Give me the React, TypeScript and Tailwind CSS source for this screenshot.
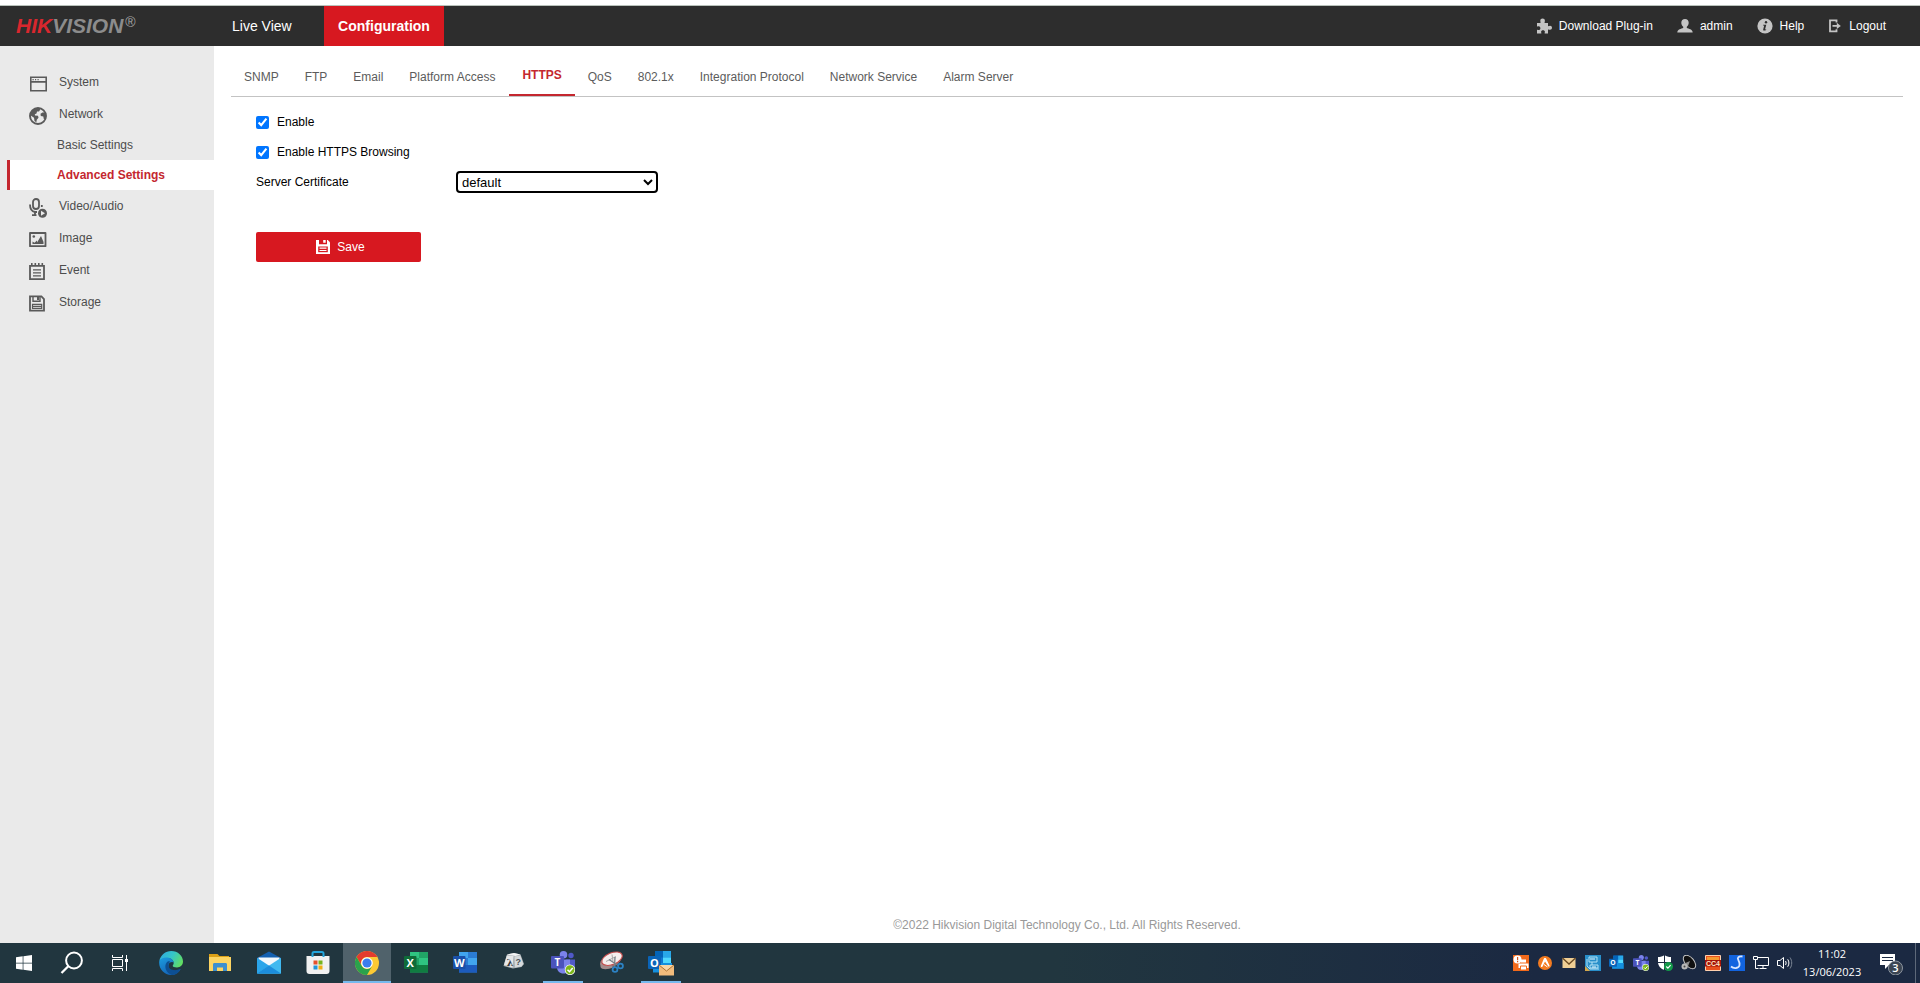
import React from 'react';
import clsx from 'clsx';

type IconProps = { className?: string };

/* ---------- Header icons ---------- */

const PuzzleIcon: React.FC<IconProps> = ({ className }) => (
    <svg viewBox="0 0 16 16" className={className} fill="currentColor">
        <path d="M1 5h3.400C4.900 4.300 4.300 3.900 4.300 2.700 4.300 1.400 5.300 .5 6.600 .5s2.300.9 2.300 2.200c0 1.200-.6 1.600-.2 2.300H12v3c.7.400 1.100-.2 2.100-.2 1.100 0 1.900.9 1.900 2s-.8 2-1.900 2c-1 0-1.400-.6-2.100-.2V15.500H8.700c-.3-.6.2-1 .2-1.700 0-1-.8-1.600-1.900-1.600s-1.900.6-1.900 1.600c0 .7.500 1.100.2 1.700H1v-3.700c.6-.3 1 .2 1.700.2 1 0 1.700-.8 1.700-1.800S3.700 8.300 2.700 8.300c-.7 0-1.100.4-1.700.1z" />
    </svg>
);

const UserIcon: React.FC<IconProps> = ({ className }) => (
    <svg viewBox="0 0 16 16" className={className} fill="currentColor">
        <path d="M8 1c2.300 0 3.700 1.600 3.700 3.800 0 1.700-.8 3-1.900 3.900v1.400c1.900.7 5.700 1.300 5.900 4.400H.3c.2-3.100 4-3.700 5.900-4.400V8.700C5.100 7.800 4.300 6.500 4.300 4.800 4.300 2.600 5.700 1 8 1z" />
    </svg>
);

const InfoIcon: React.FC<IconProps> = ({ className }) => (
    <svg viewBox="0 0 16 16" className={className}>
        <circle cx="8" cy="8" r="7.600" fill="currentColor" />
        <circle cx="9" cy="4.300" r="1.200" fill="#2d2d2d" />
        <path d="M6.200 6.700h3.100L8 11.500l1.300-.3-.3.900c-1 .7-3.200.9-2.800-.7l1-3.800-1.300-.1z" fill="#2d2d2d" />
    </svg>
);

const LogoutIcon: React.FC<IconProps> = ({ className }) => (
    <svg viewBox="0 0 14 16" className={clsx(className, 'w-[14px]')} fill="none" stroke="currentColor" strokeWidth="1.800">
        <path d="M8.500 4.500V2.400H2v11h6.500v-2.100M4.500 7.900H10" />
        <path d="M8.800 4.700 12.800 7.900l-4 3.200z" fill="currentColor" stroke="none" />
    </svg>
);

/* ---------- Sidebar icons ---------- */

const SystemIcon: React.FC<IconProps> = ({ className }) => (
    <svg viewBox="0 0 18 18" className={className} fill="none" stroke="currentColor" strokeWidth="1.600">
        <path d="M1.800 2.300h15.400v13.400H1.800zM1.800 6.900h15.400" />
        <path d="M3.500 4.600h1.200M6 4.600h1.200M8.500 4.600h1.200" strokeWidth="1.200" />
    </svg>
);

const GlobeIcon: React.FC<IconProps> = ({ className }) => (
    <svg viewBox="0 0 18 18" className={className}>
        <circle cx="9" cy="9" r="8" fill="none" stroke="currentColor" strokeWidth="1.900" />
        <path d="M1 8 2 5l3-3 4.500-1 1.800 1.500L10 4.500H8L7.500 6.500 5.800 7.200 6 8.500l3 .2.5 2-1.700 2-.5 2.500L5.500 14l-.5-3.200z" fill="currentColor" />
        <path d="M17 6.500l-3-1.300-2.500 1.500.3 2.300 2.500.5.5 2.500 1.700.5z" fill="currentColor" />
    </svg>
);

const VideoIcon: React.FC<IconProps> = ({ className }) => (
    <svg viewBox="0 0 18 20" className={clsx(className, 'h-5')} fill="none" stroke="currentColor" strokeWidth="1.800">
        <rect x="4" y="1" width="6" height="10" rx="3" />
        <path d="M1 6.500c0 4.500 2 7 5 7.500h2M6 14v3M3 17.200h4.500" />
        <path d="M12.800 7v2" />
        <circle cx="13.500" cy="15.300" r="4.500" fill="currentColor" stroke="none" />
        <path d="m12 12.800 4 2.500-4 2.500z" fill="#eaeaea" stroke="none" />
    </svg>
);

const ImageIcon: React.FC<IconProps> = ({ className }) => (
    <svg viewBox="0 0 18 18" className={className}>
        <path d="M1 2h15.500v13.200H1z" fill="none" stroke="currentColor" strokeWidth="1.800" strokeLinejoin="round" />
        <circle cx="4.800" cy="5.500" r="1.300" fill="currentColor" />
        <path d="M3.500 13V10.500l2 1.200L8 9.500v2l4-6.500 2.500 6v2z" fill="currentColor" />
    </svg>
);

const EventIcon: React.FC<IconProps> = ({ className }) => (
    <svg viewBox="0 0 18 18" className={className} fill="none" stroke="currentColor" strokeWidth="1.800">
        <path d="M1 2.800h14v13.400H1z" />
        <path d="M2.800 0v3M6.300 0v3M9.800 0v3M13.300 0v3" strokeWidth="1.600" />
        <path d="M4 6.800h8M4 9.800h8M4 12.800h8" strokeWidth="1.200" />
    </svg>
);

const DiskIcon: React.FC<IconProps> = ({ className }) => (
    <svg viewBox="0 0 18 18" className={className} fill="none" stroke="currentColor" strokeWidth="1.800">
        <path d="M1 1.400h11.400l2.600 2.600v11.600H1z" />
        <path d="M4 1.500v4.700h7V1.500" strokeWidth="1.400" />
        <path d="M8 2h2v3H8z" fill="currentColor" stroke="none" />
        <path d="M3.500 9.300h9.200v4H3.500zM3.500 11.400h9" strokeWidth="1.200" />
    </svg>
);

const SaveIcon: React.FC<IconProps> = ({ className }) => (
    <svg viewBox="0 0 14 14" className={className}>
        <path d="M0 0h11.800L14 2.200V14H0z" fill="#fff" />
        <path d="M3 0v4.300h8V0H9.700v2.800H7.200V0z" fill="#d71820" />
        <path d="M2.200 6.500h9.600v5.700H2.200z" fill="#d71820" />
        <path d="M3.500 8.200h7M3.500 10.500h7" stroke="#fff" strokeWidth="1.200" />
    </svg>
);

/* ---------- Taskbar icons ---------- */

const WindowsIcon = () => (
    <svg viewBox="0 0 16 16" className="size-4" fill="#fff">
        <path d="M0 2.300 6.700 1.300v6.400H0zM7.400 1.200 16 0v7.700H7.400zM0 8.400h6.700v6.400L0 13.800zM7.400 8.400H16V16l-8.600-1.200z" />
    </svg>
);

const SearchIcon = () => (
    <svg viewBox="0 0 24 24" className="size-6" fill="none" stroke="#fff" strokeWidth="2">
        <circle cx="14" cy="9.500" r="7.900" />
        <path d="M8.500 15 1.500 22" strokeWidth="2.300" />
    </svg>
);

const TaskViewIcon = () => (
    <svg viewBox="0 0 16 16" className="size-4" fill="none" stroke="#fff">
        <path d="M.5 0v2.500h10V0M.5 16v-2.500h10V16M.5 4.500h10v7H.5zM14.500 0v16" />
        <path d="M13 4h3v3h-3z" fill="#fff" stroke="none" />
    </svg>
);

const EdgeIcon = () => (
    <svg viewBox="0 0 24 24" className="size-6">
        <defs>
            <linearGradient id="edgeTop" x1="0" y1="0.200" x2="1" y2="0.600">
                <stop offset="0" stopColor="#2fa9e0" />
                <stop offset=".5" stopColor="#35c6c8" />
                <stop offset="1" stopColor="#62dd62" />
            </linearGradient>
            <linearGradient id="edgeLow" x1="0" y1="0" x2="0.600" y2="1">
                <stop offset="0" stopColor="#1b9de0" />
                <stop offset="1" stopColor="#1460b4" />
            </linearGradient>
        </defs>
        <path d="M.3 10C1.500 4 6.500 0 12.200 0 19 0 24 4.900 24 10.500c0 3.700-2.700 5.900-6 5.900-2.700 0-4.300-.8-4.300-1.700 0-.7 1-1 1-2.700C14.700 9.300 12 7 8.500 7 4.500 7 1.500 8.500.3 10z" fill="url(#edgeTop)" />
        <path d="M.3 10C1.700 7.400 5 6 8.500 6.500c3.500.4 6 2.700 6.100 5-1-1-5.200-.7-5.200 3.400 0 4.500 6 6.700 12.200 3.300C19.500 21.700 16 24 12 24 5 24-.8 17.500.3 10z" fill="url(#edgeLow)" />
        <path d="M8.700 10.500c-4.200 3.300-2.700 11.200 4.300 13.400 3.500.2 6.500-1.800 8.500-5.400.4-.6-.3-.6-.7-.4-5.200 2.400-11.400.5-11.400-3.600 0-1.800.7-3 1.700-3.800-.7-.5-1.700-.6-2.400-.2z" fill="#0d4f93" />
    </svg>
);

const FolderIcon = () => (
    <svg viewBox="0 0 24 24" className="size-6">
        <path d="M1 3h8.500l2 2H21v4H1z" fill="#dba017" />
        <path d="M1 6h22v14H1z" fill="#fcd462" />
        <path d="M5 20v-6.500c0-1 .6-1.500 1.500-1.500h11c.9 0 1.500.5 1.500 1.500V20h-4v-3.500H9V20z" fill="#3d8fcf" />
    </svg>
);

const MailIcon = () => (
    <svg viewBox="0 0 24 24" className="size-6">
        <path d="M0 7 12 .5 24 7v3H0z" fill="#1460b0" />
        <path d="M1.500 6.500h21v9h-21z" fill="#f2f8fc" />
        <path d="M0 6.800 24 22.500H0z" fill="#2aa5ea" />
        <path d="M24 6.800 0 22.500h24z" fill="#40b9f0" />
        <path d="M12 14.600 24 22.500H0z" fill="#1c8ddc" />
    </svg>
);

const StoreIcon = () => (
    <svg viewBox="0 0 24 24" className="size-6">
        <path d="M.5 5h23v15c0 2-1 3-3 3h-17c-2 0-3-1-3-3z" fill="#f1f1f1" />
        <path d="M6.500 6V2.500C6.500 1.500 7 1 8 1h8c1 0 1.500.5 1.500 1.500V6" fill="none" stroke="#22a5dc" strokeWidth="2" />
        <path d="M7.500 9.500h4v4h-4z" fill="#e5502b" />
        <path d="M12.500 9.500h4v4h-4z" fill="#77b41c" />
        <path d="M7.500 14.500h4v4h-4z" fill="#2195d8" />
        <path d="M12.500 14.500h4v4h-4z" fill="#eeae15" />
    </svg>
);

const ChromeIcon = () => (
    <svg viewBox="0 0 24 24" className="size-6">
        <circle cx="12" cy="12" r="12" fill="#fcc934" />
        <path d="M1.600 6A12 12 0 0 1 22.400 6H12a6 6 0 0 0-5.200 9z" fill="#e33b2e" />
        <path d="M1.600 6A12 12 0 0 0 12 24l5.200-9A6 6 0 0 1 6.800 15z" fill="#2ba24c" />
        <circle cx="12" cy="12" r="5.800" fill="#fff" />
        <circle cx="12" cy="12" r="4.600" fill="#3b7ded" />
    </svg>
);

const OfficeIcon: React.FC<{ letter: string; tones: string[] }> = ({ letter, tones }) => (
    <svg viewBox="0 0 24 24" className="size-6">
        <path d="M6 1h18v20.500H6z" fill={tones[0]} />
        <path d="M6 1h9v6H6z" fill={tones[1]} />
        <path d="M15 7h9v7h-9z" fill={tones[1]} />
        <path d="M6 14h18v7.500H6z" fill={tones[2]} />
        <rect x="0" y="5" width="12.500" height="13" rx="1" fill={tones[3]} />
        <text x="6.200" y="15.500" textAnchor="middle" fontSize="11" fontWeight="700" fill="#fff" className="font-['Open_Sans',sans-serif]">{letter}</text>
    </svg>
);

const LambdaIcon = () => (
    <svg viewBox="0 0 24 24" className="size-6">
        <path d="M5 3.500 12 2l6.500 1.500L22 13l-2.500 3-8.500 1.500L1.500 15z" fill="#a9b0b4" />
        <path d="M5 3.500 12 2l6.500 1.500-5 1.500z" fill="#f3f4f4" />
        <path d="M4.800 4.500 11.500 5 10.500 16.500 2 14z" fill="#e5e7e8" />
        <path d="M12.500 5.500 18.300 4.500l3 8.500-2 2.500-6.300 1z" fill="#d5d9db" />
        <text x="4.500" y="14.500" fontSize="10" fontWeight="700" fill="#35393d" className="font-['DejaVu_Serif',serif]">λ</text>
        <text x="13.500" y="13.500" fontSize="9" fontWeight="700" fill="#4a5055" className="font-['Liberation_Sans',sans-serif]">?</text>
    </svg>
);

const TeamsIcon: React.FC<IconProps> = ({ className }) => (
    <svg viewBox="0 0 24 24" className={className}>
        <circle cx="20" cy="4.500" r="2.700" fill="#5059c9" />
        <circle cx="12.500" cy="3.800" r="3.800" fill="#7b83eb" />
        <path d="M15 8.500h9V15c0 3-2 4.500-5 4.500z" fill="#5059c9" />
        <path d="M6 8.500h13V16c0 4-2.500 6.500-6.500 6.500S6 20 6 16z" fill="#7b83eb" />
        <rect x="0" y="5" width="13" height="12.500" rx="1" fill="#4b53bc" />
        <text x="6.500" y="15" textAnchor="middle" fontSize="10" fontWeight="700" fill="#fff" className="font-['Open_Sans',sans-serif]">T</text>
        <circle cx="19" cy="18.700" r="5.200" fill="#fff" />
        <circle cx="19" cy="18.700" r="4.500" fill="#7db61c" />
        <path d="m16.500 18.700 2 2 3.200-3.700" fill="none" stroke="#fff" strokeWidth="1.500" />
    </svg>
);

const SnipIcon = () => (
    <svg viewBox="0 0 24 24" className="size-6">
        <ellipse cx="10.500" cy="10" rx="11" ry="6.500" transform="rotate(-22 10.500 10)" fill="#8d7272" />
        <path d="M.5 12v4c1 3 8 2.500 12 .5L11 13z" fill="#a48c8c" />
        <ellipse cx="12" cy="7.700" rx="10.800" ry="5.800" transform="rotate(-22 12 7.700)" fill="#f5eeee" stroke="#c64b4b" />
        <path d="m6 10.500 10-5M12 3.500l1 7" stroke="#a9a9a9" />
        <path d="m9 8.500 9 6M15 6l-.5 10" stroke="#777f86" strokeWidth="1.300" />
        <circle cx="15" cy="18.500" r="2.400" fill="none" stroke="#2c82c4" strokeWidth="1.800" />
        <circle cx="20.500" cy="15" r="2.400" fill="none" stroke="#2c82c4" strokeWidth="1.800" />
    </svg>
);

const OutlookIcon: React.FC<{ className?: string; badge?: boolean }> = ({ className, badge }) => (
    <svg viewBox="0 0 26 26" className={className}>
        <path d="M7 1h16v13H7z" fill="#0f78d4" />
        <path d="M7 1h8v6.500H7z" fill="#0364b8" />
        <path d="M15 1h8v6.500h-8z" fill="#28a8ea" />
        <path d="M15 7.500h8V14h-8z" fill="#50d9ff" />
        <path d="M5 13h19v9.500H5z" fill="#1490df" />
        <rect x="0" y="6" width="13" height="13" rx="1" fill="#0a64b8" />
        <text x="6.500" y="16.500" textAnchor="middle" fontSize="11" fontWeight="700" fill="#fff" className="font-['Open_Sans',sans-serif]">O</text>
        {badge && (
            <>
                <path d="M11 15h15v10.500H11z" fill="#f0bb7c" />
                <path d="m11 15 7.500 6 7.500-6" fill="#f8d6a6" stroke="#ad7434" />
            </>
        )}
    </svg>
);

const trayIcons = [
    {
        name: 'Printer alert',
        art: (
            <>
                <path d="M0 0h16v16H0z" fill="#f26a1b" />
                <circle cx="4.500" cy="4.500" r="4" fill="#fff" />
                <path d="M4 2h1.200v3.300H4zM4 6h1.200v1.200H4z" fill="#d3541a" />
                <path d="M8 4.500h5v3H8zM5.500 8.500h10V13h-10z" fill="#fff" />
                <path d="M7.500 11h6v4h-6z" fill="#fff" stroke="#f26a1b" />
            </>
        )
    },
    {
        name: 'Avast',
        art: (
            <>
                <circle cx="8" cy="8" r="7" fill="#f47b20" />
                <path d="M8 3c.8 0 1.200.6 1.500 1.200l3 6.300c.4 1-.7 1.600-1.300.8L8 6.500l-2.500 5c-.5 1-2 .5-1.600-.7l2.700-6.500C6.900 3.500 7.300 3 8 3z" fill="#fff" />
                <path d="m7 9.500 3.500 2.500" stroke="#fff" />
            </>
        )
    },
    {
        name: 'New mail',
        art: (
            <>
                <path d="M1.500 3h13v10h-13z" fill="#f0cf95" />
                <path d="m1.500 3 6.500 6 6.500-6" fill="none" stroke="#6a4a22" strokeWidth="1.300" />
            </>
        )
    },
    {
        name: 'Network monitor',
        art: (
            <>
                <path d="M0 0h16v16H0z" fill="#298fca" />
                <path d="M0 11 5 16H0z" fill="#d4a74a" />
                <path d="M4 2h8v5H4zM7 7v3M5 10h8v3H5zM2 4v7l3 3h9" fill="none" stroke="#b4e2f6" />
                <path d="M5 4h5M7 12h4" stroke="#e9f8ff" />
            </>
        )
    },
    { name: 'Outlook', art: null },
    { name: 'Teams', art: null },
    {
        name: 'Windows Security',
        art: (
            <>
                <path d="M7.500 0c2 1.500 4 2 6.500 2v5c0 4-3 7-6.500 8C4 14 1 11 1 7V2c2.500 0 4.500-.5 6.500-2z" fill="#fff" />
                <path d="M7.500 0v15M1 7.500h13" stroke="#1c2b40" />
                <circle cx="11.500" cy="11.500" r="4.500" fill="#149a4a" />
                <path d="m9.300 11.500 1.600 1.600 2.700-3" fill="none" stroke="#fff" strokeWidth="1.200" />
            </>
        )
    },
    {
        name: 'Audio manager',
        art: (
            <>
                <ellipse cx="8.500" cy="7" rx="8" ry="4.500" transform="rotate(50 8.500 7)" fill="#111" stroke="#c6c6c6" />
                <path d="m2 9 7-3-3 8z" fill="#8d8d8d" />
                <circle cx="3.500" cy="11.500" r="3" fill="#b9b9b9" />
                <circle cx="3.500" cy="11.500" r="1" fill="#444" />
            </>
        )
    },
    {
        name: 'CC4',
        art: (
            <>
                <path d="M.5.5h15v15H.5z" fill="#e8501d" stroke="#ffd0ae" />
                <path d="M2 2h12v3H2z" fill="#f6992f" />
                <path d="M0 5h16v6.500H0z" fill="#a31208" />
                <text x="8" y="11" textAnchor="middle" fontSize="7" fontWeight="700" fill="#ffe7c4" className="font-['Liberation_Sans',sans-serif]">CC4</text>
            </>
        )
    },
    {
        name: 'Sync',
        art: (
            <>
                <path d="M0 0h16v16H0z" fill="#1264e0" />
                <path d="M13.500 1.500C9 1 8 3 9.500 5.500c2 3.500 1.500 7-2.500 7.500-2 .2-4-.6-5-1.500" fill="none" stroke="#d9e7ff" strokeWidth="1.800" />
            </>
        )
    },
    {
        name: 'Network',
        art: (
            <g fill="none" stroke="#fff">
                <path d="M4.500 2.500h11v8h-11" />
                <path d="M.5 1.500h4v3h-4zM2.500 4.500v9h3M6.500 13.500h7M10 10.500v3" />
            </g>
        )
    },
    {
        name: 'Volume',
        art: (
            <g fill="none" stroke="#fff">
                <path d="M.5 5.500h2.500l3.500-3v11l-3.500-3H.5z" />
                <path d="M8.500 6c.8 1.300.8 2.700 0 4M10.700 4.300c1.600 2.300 1.600 5.100 0 7.400" />
                <path d="M13 2.500c2.300 3.300 2.300 7.700 0 11" stroke="#7d8796" />
            </g>
        )
    }
];

/* ---------- Data ---------- */

const tools = [
    { label: 'Download Plug-in', icon: PuzzleIcon },
    { label: 'admin', icon: UserIcon },
    { label: 'Help', icon: InfoIcon },
    { label: 'Logout', icon: LogoutIcon }
];

const menu = [
    { label: 'System', icon: SystemIcon },
    { label: 'Network', icon: GlobeIcon, children: ['Basic Settings', 'Advanced Settings'] },
    { label: 'Video/Audio', icon: VideoIcon },
    { label: 'Image', icon: ImageIcon },
    { label: 'Event', icon: EventIcon },
    { label: 'Storage', icon: DiskIcon }
];

const tabs = [
    'SNMP', 'FTP', 'Email', 'Platform Access', 'HTTPS', 'QoS', '802.1x',
    'Integration Protocol', 'Network Service', 'Alarm Server'
];

const apps = [
    { name: 'Edge', icon: <EdgeIcon /> },
    { name: 'File Explorer', icon: <FolderIcon /> },
    { name: 'Mail', icon: <MailIcon /> },
    { name: 'Store', icon: <StoreIcon /> },
    { name: 'Chrome', icon: <ChromeIcon />, active: true },
    { name: 'Excel', icon: <OfficeIcon letter="X" tones={['#21a366', '#2fc481', '#107c41', '#0f6b38']} /> },
    { name: 'Word', icon: <OfficeIcon letter="W" tones={['#2b7cd3', '#41a5ee', '#1d5bbd', '#1a50a8']} /> },
    { name: 'Lambda', icon: <LambdaIcon /> },
    { name: 'Teams', icon: <TeamsIcon className="size-6" />, open: true },
    { name: 'Snipping Tool', icon: <SnipIcon /> },
    { name: 'Outlook', icon: <OutlookIcon className="size-[26px]" badge />, open: true }
];

/* ---------- Layout ---------- */

const Header = () => (
    <header className="flex h-10 items-stretch bg-[#2d2d2d] text-white">
        <div className="flex w-[202px] shrink-0 items-start pt-2 pl-4">
            <span className="text-[21px] leading-6 font-bold italic text-[#d9272e]">HIK</span>
            <span className="text-[21px] leading-6 font-bold italic text-[#8c8c8c]">VISION</span>
            <span className="pl-[2px] text-sm leading-4 text-[#a5a5a5]">®</span>
        </div>
        <nav className="flex text-sm">
            <a href="#live" className="flex w-[122px] items-center pl-[30px]">Live View</a>
            <a href="#configuration" className="flex w-[120px] items-center justify-center bg-[#d71820] font-bold">Configuration</a>
        </nav>
        <div className="ml-auto flex items-center gap-6 pr-[34px] text-xs">
            {tools.map(({ label, icon: Icon }) => (
                <a key={label} href="#tools" className="flex items-center gap-[7px]">
                    <Icon className="size-4 text-[#c4c4c4]" />
                    {label}
                </a>
            ))}
        </div>
    </header>
);

const Sidebar = () => (
    <aside className="w-[214px] shrink-0 bg-[#eaeaea] pt-5 text-xs text-[#4d4d4d]">
        {menu.map(({ label, icon: Icon, children }) => (
            <div key={label}>
                <a href="#menu" className="flex h-8 items-center gap-3 pl-[29px]">
                    <Icon className="mt-1 size-[18px] text-[#5a5a5a]" />
                    {label}
                </a>
                {children?.map((child) => (
                    <a
                        key={child}
                        href="#submenu"
                        className={clsx(
                            'ml-[7px] flex h-[30px] items-center border-l-3 pl-[47px]',
                            child === 'Advanced Settings' ? 'border-[#c4272f] bg-white font-bold text-[#c4272f]' : 'border-transparent'
                        )}
                    >
                        {child}
                    </a>
                ))}
            </div>
        ))}
    </aside>
);

const SettingsPage = () => (
    <main className="flex flex-1 flex-col">
        <nav className="mx-[17px] flex h-[51px] border-b border-[#c3c3c3] text-xs text-[#5c5c5c]">
            {tabs.map((tab) => (
                <a
                    key={tab}
                    href="#tab"
                    className={clsx(
                        'flex items-center px-[13px]',
                        tab === 'HTTPS' ? 'ml-px border-b-2 border-[#c4272f] pt-[10px] font-bold text-[#c4272f]' : 'pt-3'
                    )}
                >
                    {tab}
                </a>
            ))}
        </nav>

        <form className="pt-[10px] pl-[42px] text-xs text-black">
            <div className="flex h-[30px] items-center">
                <input id="enable" type="checkbox" defaultChecked className="mr-2 size-[13px]" />
                <label htmlFor="enable">Enable</label>
            </div>
            <div className="flex h-[30px] items-center">
                <input id="browsing" type="checkbox" defaultChecked className="mr-2 size-[13px]" />
                <label htmlFor="browsing">Enable HTTPS Browsing</label>
            </div>
            <div className="flex h-[30px] items-center">
                <label htmlFor="certificate" className="w-[200px]">Server Certificate</label>
                <select id="certificate" className="h-[22px] w-[202px] rounded border-2 border-black bg-white text-[13px]">
                    <option>default</option>
                </select>
            </div>
            <button type="button" className="mt-[35px] flex h-[30px] w-[165px] items-center justify-center gap-[7px] rounded-xs bg-[#d71820] pb-px pl-1 text-white">
                <SaveIcon className="size-[14px]" />
                Save
            </button>
        </form>

        <footer className="mt-auto pb-[10px] text-center text-xs text-[#999]">
            ©2022 Hikvision Digital Technology Co., Ltd. All Rights Reserved.
        </footer>
    </main>
);

const Taskbar = () => (
    <div className="flex h-10 shrink-0 items-stretch bg-linear-to-r from-[#21363f] from-55% to-[#1b2942] to-80% text-white">
        <button aria-label="Start" className="flex w-12 items-center justify-center"><WindowsIcon /></button>
        <button aria-label="Search" className="flex w-12 items-center justify-center"><SearchIcon /></button>
        <button aria-label="Task view" className="flex w-12 items-center justify-center"><TaskViewIcon /></button>
        <div className="ml-[3px] flex gap-px">
            {apps.map(({ name, icon, active, open }) => (
                <button
                    key={name}
                    aria-label={name}
                    className={clsx('relative flex w-12 items-center justify-center', active && 'bg-[#50626b]')}
                >
                    {icon}
                    {(active || open) && (
                        <span className={clsx('absolute bottom-0 h-[2px] bg-[#76b9ed]', active ? 'inset-x-0' : 'inset-x-1')} />
                    )}
                </button>
            ))}
        </div>

        <div className="ml-auto flex">
            {trayIcons.map(({ name, art }) => (
                <button key={name} aria-label={name} className="flex w-6 items-center justify-center">
                    {name === 'Outlook' && <OutlookIcon className="size-4" />}
                    {name === 'Teams' && <TeamsIcon className="size-4" />}
                    {art && <svg viewBox="0 0 16 16" className="size-4">{art}</svg>}
                </button>
            ))}
        </div>
        <button className="flex w-[70px] flex-col items-center justify-center font-['Open_Sans',sans-serif] text-[11px] leading-[18px]">
            <span>11:02</span>
            <span>13/06/2023</span>
        </button>
        <button aria-label="Notifications" className="flex w-12 items-center justify-center">
            <svg viewBox="0 0 26 24" className="h-6 w-[26px]">
                <path d="M2 3h15v11h-6l-4 4v-4H2z" fill="#fff" />
                <path d="M4 6.500h11M4 9.500h11" stroke="#1b2942" />
                <circle cx="17.500" cy="17" r="7" fill="#3b4553" stroke="#8e96a0" />
                <text x="17.500" y="21" textAnchor="middle" fontSize="11" fontWeight="600" fill="#fff" className="font-['Open_Sans',sans-serif]">3</text>
            </svg>
        </button>
        <div className="w-[5px] border-l border-[#5d6879]" />
    </div>
);

const App: React.FC = () => {
    return (
        <div className="flex min-h-screen flex-col bg-white font-['Liberation_Sans',Arial,sans-serif]">
            <div className="h-[6px] border-b border-[#b9c2bb]" />
            <Header />
            <div className="flex flex-1">
                <Sidebar />
                <SettingsPage />
            </div>
            <Taskbar />
        </div>
    );
};

export default App;
